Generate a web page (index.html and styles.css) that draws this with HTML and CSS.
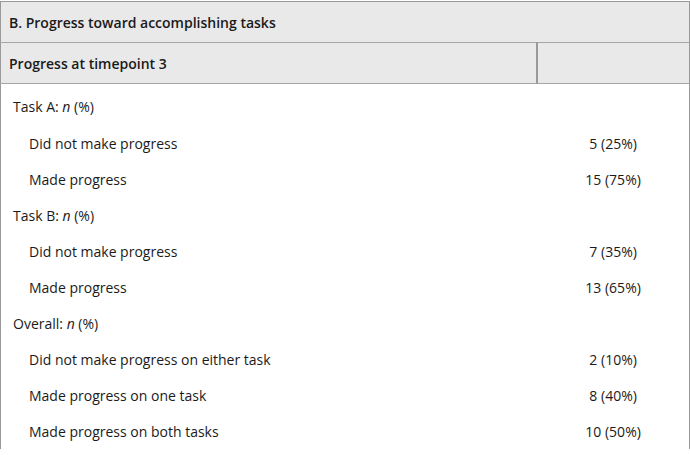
FILE: index.html
```html
<!DOCTYPE html>
<html>
<head>
<meta charset="utf-8">
<link rel="stylesheet" href="styles.css">
</head>
<body>
<table class="tbl">
  <thead>
    <tr class="hrow"><th colspan="2" class="title">B. Progress toward accomplishing tasks</th></tr>
    <tr class="hrow"><th class="sub">Progress at timepoint 3</th><th class="subval"></th></tr>
  </thead>
  <tbody>
    <tr class="first"><td class="grp">Task A: <i>n</i> (%)</td><td></td></tr>
    <tr><td class="item">Did not make progress</td><td class="val">5 (25%)</td></tr>
    <tr><td class="item">Made progress</td><td class="val">15 (75%)</td></tr>
    <tr><td class="grp">Task B: <i>n</i> (%)</td><td></td></tr>
    <tr><td class="item">Did not make progress</td><td class="val">7 (35%)</td></tr>
    <tr><td class="item">Made progress</td><td class="val">13 (65%)</td></tr>
    <tr><td class="grp">Overall: <i>n</i> (%)</td><td></td></tr>
    <tr><td class="item">Did not make progress on either task</td><td class="val">2 (10%)</td></tr>
    <tr><td class="item">Made progress on one task</td><td class="val">8 (40%)</td></tr>
    <tr><td class="item">Made progress on both tasks</td><td class="val">10 (50%)</td></tr>
  </tbody>
</table>
</body>
</html>
```
FILE: styles.css
```css
html, body {
  margin: 0;
  padding: 0;
  background: #fff;
}
body {
  font-family: "Open Sans", "Liberation Sans", sans-serif;
  font-size: 14px;
  color: #1a1a1a;
  padding-top: 1px;
}
.tbl {
  width: 690px;
  border-collapse: collapse;
  border: 1px solid #999;
  border-bottom: none;
}
.hrow th {
  background: #e9e9e9;
  text-align: left;
  font-weight: 600;
  height: 40px;
  padding: 0 8px;
  border-bottom: 1px solid #a6a6a6;
  vertical-align: middle;
}
.sub {
  width: 520px;
  border-right: 2px solid #999;
}
.subval {
  width: 135px;
}
tbody td {
  height: 36px;
  padding: 0;
  vertical-align: middle;
}
tbody tr.first td {
  height: 37px;
  padding-top: 4px;
}
.grp {
  padding-left: 12px !important;
}
.item {
  padding-left: 28px !important;
}
.val {
  text-align: center;
}
```
